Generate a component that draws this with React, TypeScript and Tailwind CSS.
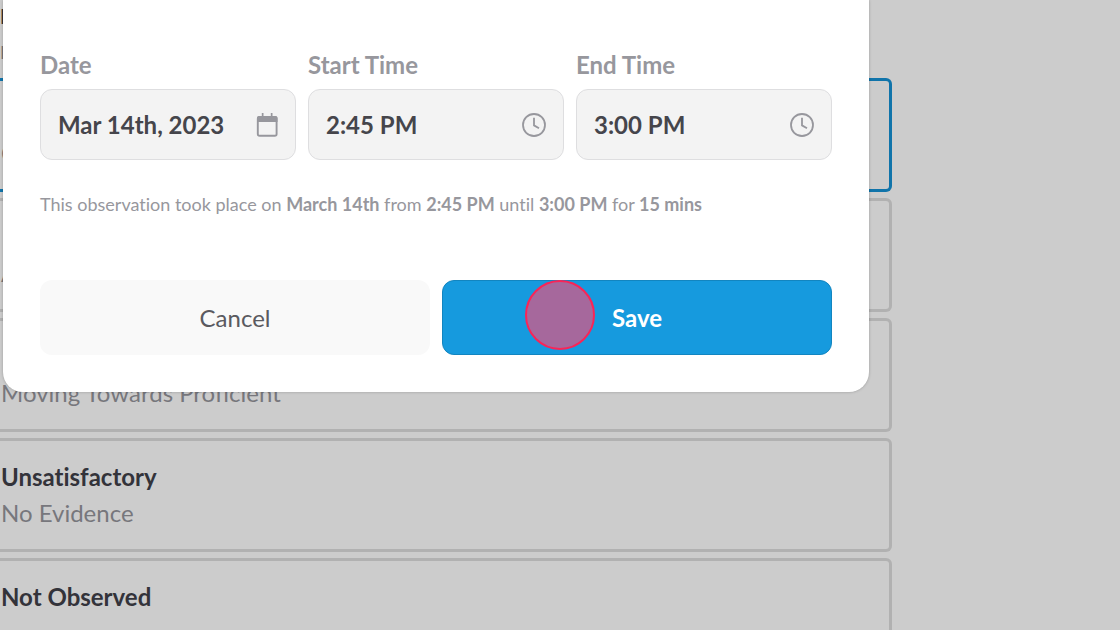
import React from 'react';

const ratings = [
    { title: '', description: 'C', selected: true },
    { title: '', description: 'A', selected: false },
    {
        title: '',
        description: 'Moving Towards Proficient',
        selected: false,
    },
    {
        title: 'Unsatisfactory',
        description: 'No Evidence',
        selected: false,
    },
    { title: 'Not Observed', description: '', selected: false },
];

function CalendarIcon() {
    return (
        <svg className="size-6 shrink-0" viewBox="0 0 24 24" fill="none">
            <rect
                x="2.8"
                y="4"
                width="18.8"
                height="18.8"
                rx="1.8"
                stroke="#97979d"
                strokeWidth="1.9"
            />
            <path
                d="M2 5a2 2 0 0 1 2-2h16.5a2 2 0 0 1 2 2v4H2zM6.8 0h1.7v4H6.8zM15.8 0h1.7v4h-1.7z"
                fill="#97979d"
            />
        </svg>
    );
}

function ClockIcon() {
    return (
        <svg
            className="size-6 shrink-0 overflow-visible"
            viewBox="1 0 24 24"
            fill="none"
            stroke="#97979d"
            strokeWidth="1.8"
        >
            <circle cx="12" cy="12" r="11" />
            <path d="M12 4.8v7.6l5 2.8" />
        </svg>
    );
}

type FieldProps = {
    id: string;
    label: string;
    value: string;
    icon: React.ReactNode;
};

function Field({ id, label, value, icon }: FieldProps) {
    return (
        <div className="min-w-0">
            <label
                htmlFor={id}
                className="block text-2xl leading-8 font-bold text-[#97979d]"
            >
                {label}
            </label>
            <div className="mt-2 flex h-[71px] items-center rounded-xl border border-[#dedee0] bg-[#f3f3f3] pr-4 pl-[17px]">
                <input
                    id={id}
                    type="text"
                    defaultValue={value}
                    className="w-full min-w-0 flex-1 bg-transparent text-2xl font-bold text-[#45454b] outline-none"
                />
                {icon}
            </div>
        </div>
    );
}

export default function App() {
    return (
        <div className="relative h-screen overflow-hidden bg-[#cccccc] font-['Lato',sans-serif] [font-variant-ligatures:none]">
            <main className="pr-[228px]">
                <div className="h-[78px]">
                    <h1 className="text-xl leading-8 font-bold text-[#33333a]">
                        I
                    </h1>
                    <p className="text-lg leading-10 text-[#77777c]">I</p>
                </div>
                <ul className="flex flex-col gap-[6px]">
                    {ratings.map((rating, i) => (
                        <li
                            key={i}
                            className={
                                rating.selected
                                    ? 'h-[114px] rounded-r-md border-[3px] border-l-0 border-[#1074aa] py-[18px] pl-px'
                                    : 'h-[114px] rounded-r-md border-[3px] border-l-0 border-[#b1b1b1] py-[18px] pl-px'
                            }
                        >
                            <h2 className="h-9 text-2xl leading-9 font-bold text-[#33333a]">
                                {rating.title}
                            </h2>
                            <p className="h-9 text-2xl leading-9 text-[#77777c]">
                                {rating.description}
                            </p>
                        </li>
                    ))}
                </ul>
            </main>

            {/* Dialog sits on top of the dimmed rating list */}
            <div className="absolute inset-x-0 top-0 pr-[251px] pl-[3px]">
                <form
                    role="dialog"
                    aria-label="Observation time"
                    className="rounded-b-[20px] bg-white px-[37px] pt-[49px] pb-[37px] shadow-[0_0_3px_rgba(0,0,0,0.25)]"
                >
                    <div className="grid grid-cols-3 gap-3">
                        <Field
                            id="date"
                            label="Date"
                            value="Mar 14th, 2023"
                            icon={<CalendarIcon />}
                        />
                        <Field
                            id="start"
                            label="Start Time"
                            value="2:45 PM"
                            icon={<ClockIcon />}
                        />
                        <Field
                            id="end"
                            label="End Time"
                            value="3:00 PM"
                            icon={<ClockIcon />}
                        />
                    </div>

                    <p className="mt-8 text-lg leading-6 text-[#97979d]">
                        This observation took place on <b>March 14th</b> from{' '}
                        <b>2:45 PM</b> until <b>3:00 PM</b> for <b>15 mins</b>
                    </p>

                    <div className="mt-16 grid grid-cols-2 gap-3">
                        <button
                            type="button"
                            className="h-[75px] rounded-xl bg-[#f9f9f9] text-2xl text-[#5a5a60]"
                        >
                            Cancel
                        </button>
                        <button
                            type="button"
                            className="relative h-[75px] rounded-xl border border-[#1285c0] bg-[#169ade] text-2xl font-bold text-white"
                        >
                            Save
                            <span className="absolute -top-px left-[82px] size-[70px] rounded-full border-2 border-[#fa2457] bg-[#a6689c]" />
                        </button>
                    </div>
                </form>
            </div>
        </div>
    );
}
